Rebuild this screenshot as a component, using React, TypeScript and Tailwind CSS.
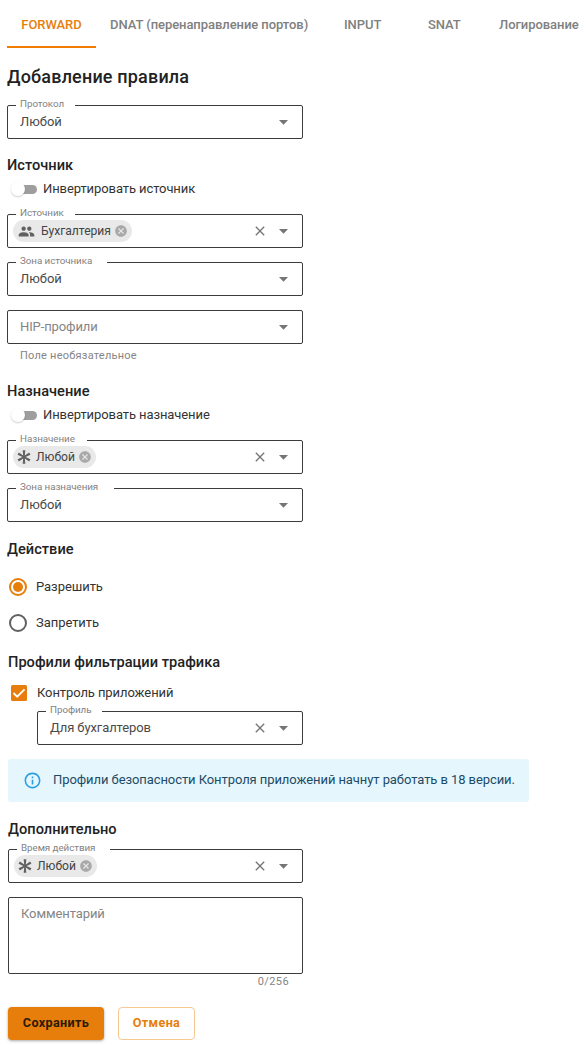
import { useState } from "react";
import type { ReactNode } from "react";
import { MdCancel, MdClose, MdInfoOutline, MdGroup } from "react-icons/md";

const tabs = [
  { label: "DNAT (перенаправление портов)", cls: "ml-[14px] w-[200px]" },
  { label: "INPUT", cls: "ml-[34px] w-[38px]" },
  { label: "SNAT", cls: "ml-[46px] w-[34px]" },
  { label: "Логирование", cls: "ml-[37px] w-[84px]" },
];

function Asterisk() {
  return (
    <svg viewBox="0 0 24 24" className="mr-[4px] size-[16px] shrink-0" fill="#616161">
      <path d="M10 2h4l-.79 7.91 6.45-4.64 2 3.46L14.42 12l7.24 3.27-2 3.46-6.45-4.64L14 22h-4l.79-7.91-6.45 4.64-2-3.46L9.58 12 2.34 8.73l2-3.46 6.45 4.64z" />
    </svg>
  );
}

function Chip({ icon, label, className }: { icon: ReactNode; label: string; className: string }) {
  return (
    <span className={`-ml-[7px] flex h-[22px] items-center rounded-full bg-[#e9e9e9] text-[12.1px] leading-none text-[#444] ${className}`}>
      {icon}
      <span className="flex-1">{label}</span>
      <MdCancel className="size-[14px] shrink-0 text-[#a9a9a9]" />
    </span>
  );
}

type FieldProps = {
  label?: string;
  notch?: string;
  clearable?: boolean;
  className?: string;
  children: ReactNode;
};

function Field({ label, notch = "", clearable, className = "", children }: FieldProps) {
  return (
    <div className={`relative flex shrink-0 items-center rounded-[2px] border border-[#3c3c3c] pl-3 ${className}`}>
      {label && (
        <span className={`absolute -top-[9px] left-[8px] h-[14px] bg-white pl-1 text-[9.8px] leading-[14px] tracking-[-0.05px] whitespace-nowrap text-[#828282] ${notch}`}>
          {label}
        </span>
      )}
      <div className="flex flex-1 items-center text-[13px] leading-[14px] tracking-[-0.03px] text-[#4a4a4a]">{children}</div>
      {clearable && <MdClose className="mr-[11px] size-4 text-[#757575]" />}
      <svg viewBox="0 0 9 5" className="mr-[14px] h-[5px] w-[9px]">
        <path d="M0 0h9L4.5 4.7z" fill="#757575" />
      </svg>
    </div>
  );
}

function Heading({ children, className }: { children: ReactNode; className: string }) {
  return <h2 className={`flex shrink-0 items-center text-[14.6px] leading-[16px] font-medium tracking-[0.03px] text-[#222] ${className}`}>{children}</h2>;
}

function Toggle({ label }: { label: string }) {
  return (
    <label className="flex h-[20px] shrink-0 items-center text-[13px] leading-[14px] tracking-[-0.09px] text-[#333]">
      <span className="relative mr-[6px] ml-[5px] h-[9px] w-[25px] rounded-full bg-[#9e9e9e]">
        <span className="absolute -top-[2.5px] -left-[1px] size-[14px] rounded-full bg-white shadow-[0_1px_2px_rgba(0,0,0,0.2)]" />
      </span>
      {label}
    </label>
  );
}

export default function App() {
  const [allow, setAllow] = useState(true);
  const options = [
    { label: "Разрешить", value: true },
    { label: "Запретить", value: false },
  ];
  return (
    <main className="flex h-[1049px] w-[587px] flex-col overflow-hidden bg-white pl-[7px] font-['Roboto',sans-serif] text-[#333]">
      <nav className="flex h-[48px] shrink-0 text-[13px] font-medium tracking-[-0.06px] whitespace-nowrap text-[#808080]">
        <div className="flex w-[89px] items-center justify-center border-b-2 border-[#f07d00] pt-[3px] text-[#e77e0b]">FORWARD</div>
        {tabs.map((t) => (
          <div key={t.label} className={`flex shrink-0 items-center pt-px ${t.cls}`}>
            {t.label}
          </div>
        ))}
      </nav>
      <h1 className="flex h-[57px] shrink-0 items-center text-[18px] font-medium tracking-[0.18px] text-[#222]">Добавление правила</h1>
      <Field label="Протокол" notch="w-[59px]" className="h-[34px] w-[296px]">Любой</Field>
      <Heading className="mt-[16px] h-[20px]">Источник</Heading>
      <div className="mt-[4px]"><Toggle label="Инвертировать источник" /></div>
      <Field label="Источник" notch="w-[59px]" clearable className="mt-[15px] h-[34px] w-[296px]">
        <Chip className="w-[119px] pr-[4px] pl-[5px]" icon={<MdGroup className="mr-[6px] size-[17px] text-[#616161]" />} label="Бухгалтерия" />
      </Field>
      <Field label="Зона источника" notch="w-[91px]" className="mt-[14px] h-[34px] w-[296px]">Любой</Field>
      <Field className="mt-[14px] h-[34px] w-[296px]"><span className="tracking-[-0.1px] text-[#858585]">HIP-профили</span></Field>
      <p className="mt-[4px] h-[16px] pl-[13px] text-[11px] leading-[16px] tracking-[0.23px] text-[#858585]">Поле необязательное</p>
      <Heading className="mt-[17px] h-[20px]">Назначение</Heading>
      <div className="mt-[4px]"><Toggle label="Инвертировать назначение" /></div>
      <Field label="Назначение" notch="w-[71px]" clearable className="mt-[15px] h-[34px] w-[296px]">
        <Chip className="w-[83px] pr-[4px] pl-[3px]" icon={<Asterisk />} label="Любой" />
      </Field>
      <Field label="Зона назначения" notch="w-[98px]" className="mt-[14px] h-[34px] w-[296px]">Любой</Field>
      <Heading className="mt-[17px] h-[20px]">Действие</Heading>
      <div className="mt-[10px] flex shrink-0 flex-col">
        {options.map((o) => (
          <label key={o.label} onClick={() => setAllow(o.value)} className="flex h-[36px] items-center pl-[2px] text-[13px] tracking-[-0.05px]">
            <span className={`mr-[9px] flex size-[18px] items-center justify-center rounded-full border-2 ${allow === o.value ? "border-[#e77e0b]" : "border-[#616161]"}`}>
              {allow === o.value && <span className="size-[10px] rounded-full bg-[#e77e0b]" />}
            </span>
            {o.label}
          </label>
        ))}
      </div>
      <Heading className="mt-[11px] h-[20px] pl-px">Профили фильтрации трафика</Heading>
      <label className="mt-[11px] flex h-[20px] shrink-0 items-center pl-[4px] text-[13px] tracking-[-0.09px]">
        <svg viewBox="0 0 16 16" className="mr-[10px] size-4">
          <rect width="16" height="16" rx="1.5" fill="#e77e0b" />
          <path d="M2.5 8l3.7 3.7 7.3-7.3" fill="none" stroke="#fff" strokeWidth="1.8" />
        </svg>
        Контроль приложений
      </label>
      <Field label="Профиль" notch="w-[56px]" clearable className="mt-[8px] ml-[30px] h-[34px] w-[266px]"><span className="tracking-[-0.1px]">Для бухгалтеров</span></Field>
      <div className="mt-[14px] ml-px flex h-[43px] w-[521px] shrink-0 items-center rounded-[3px] bg-[#e5f6fd] pl-[15px] text-[13px] leading-[18px] tracking-[-0.08px] whitespace-nowrap text-[#1d4b66]">
        <MdInfoOutline className="mr-[11px] size-[19px] text-[#2c9fe0]" />
        <span className="pb-px">Профили безопасности Контроля приложений начнут работать в 18 версии.</span>
      </div>
      <Heading className="mt-[17px] ml-px h-[20px]">Дополнительно</Heading>
      <Field label="Время действия" notch="w-[93px]" clearable className="mt-[10px] ml-px h-[34px] w-[295px]">
        <Chip className="w-[83px] pr-[4px] pl-[3px]" icon={<Asterisk />} label="Любой" />
      </Field>
      <textarea placeholder="Комментарий" className="mt-[14px] ml-px h-[77px] w-[295px] shrink-0 resize-none rounded-[2px] border border-[#3c3c3c] px-3 py-[7px] text-[13px] leading-[18px] tracking-[-0.1px] outline-none placeholder:text-[#858585]" />
      <p className="w-[282px] text-right text-[11px] leading-[16px] tracking-[0.4px] text-[#858585]">0/256</p>
      <div className="mt-[17px] ml-px flex h-[33px] shrink-0 gap-[14px] text-[12.6px] font-bold tracking-[0.35px]">
        <button className="h-[33px] w-[96px] rounded-[4px] bg-[#e77e0b] text-[#2b1a06] shadow-[0_1px_3px_rgba(0,0,0,0.35)]">Сохранить</button>
        <button className="h-[33px] w-[77px] rounded-[4px] border border-[#f6c894] text-[#e77e0b]">Отмена</button>
      </div>
    </main>
  );
}
